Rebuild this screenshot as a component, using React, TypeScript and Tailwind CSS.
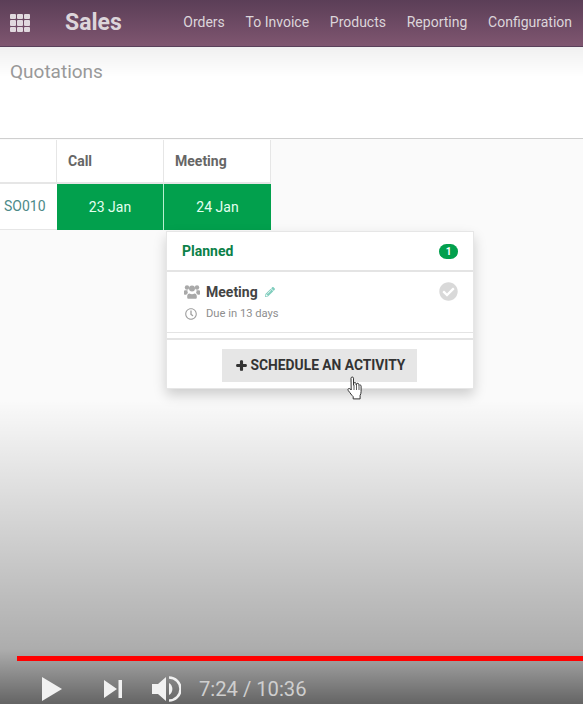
import React from "react";
import { FaCheckCircle, FaPencilAlt, FaPlus, FaRegClock } from "react-icons/fa";

const navItems = ["Orders", "To Invoice", "Products", "Reporting", "Configuration"];

function Cursor() {
  return (
    <svg width="18" height="24" viewBox="0 0 18 24" className="absolute left-[346px] top-[376px] z-30">
      <path
        d="M5 2.2c0-1.6 2.500-1.600 2.500 0v7l.2-1.700c.2-1.400 2.300-1.300 2.400.1l.1 1.400.3-.9c.4-1.300 2.300-1 2.300.3l.1 1.100c.4-1 2.200-.8 2.200.6v5.400c0 1.700-.4 2.800-1 3.900v3.500H7.200v-2.200c-1.500-1.400-3-3.700-4.900-6.100-1.100-1.500.6-2.900 2-1.600l.9 1z"
        fill="#fff"
        stroke="#333"
        strokeWidth="1"
        strokeLinejoin="round"
      />
      <path d="M8 9v5M10.500 9v5M13 10v4" stroke="#333" strokeWidth="0.8" />
    </svg>
  );
}

function UsersIcon() {
  return (
    <svg width="16" height="14" viewBox="0 0 16 14" className="text-[#a9a9a9]" fill="currentColor">
      <circle cx="3" cy="2.500" r="2.200" />
      <circle cx="13" cy="2.500" r="2.200" />
      <circle cx="8" cy="3.500" r="3" />
      <path d="M0 6.200C0 5.500.6 5.300 1.400 5.300h2.200c-.2 1-.1 2 .5 2.800-.9.3-1.500.9-1.800 1.600H1c-.6 0-1-.4-1-1zM16 6.200c0-.7-.6-.9-1.400-.9h-2.200c.2 1 .1 2-.5 2.800.9.3 1.500.9 1.800 1.600H15c.6 0 1-.4 1-1z" />
      <path d="M3.200 11.200c0-1.700 1-2.800 2.300-2.800.7.500 1.600.8 2.500.8s1.800-.3 2.500-.8c1.300 0 2.300 1.100 2.300 2.800v1.300c0 .8-.5 1.300-1.300 1.300h-7c-.8 0-1.300-.5-1.300-1.300z" />
    </svg>
  );
}

export default function App() {
  return (
    <div className="relative h-[704px] w-[583px] overflow-hidden bg-[#fafafa] font-['Roboto',sans-serif]">
      <header className="flex h-[47px] items-center border-b border-[#59405a] bg-gradient-to-b from-[#5b3e57] to-[#7f5670] text-[#dcd5da]">
        <div className="ml-[10px] grid w-[20px] grid-cols-3 gap-[1px]">
          {Array.from({ length: 9 }).map((_, i) => (
            <span key={i} className="h-[5.5px] w-[6px] rounded-[1px] bg-[#e0d9de]" />
          ))}
        </div>
        <div className="mb-[1px] ml-[35px] text-[23px] font-bold leading-none">Sales</div>
        <nav className="mb-[2px] ml-auto mr-[11px] flex gap-[20.750px] text-[14px]">
          {navItems.map((item) => (
            <span key={item}>{item}</span>
          ))}
        </nav>
      </header>

      <div className="h-[92px] border-b border-[#cfcfcf] bg-white px-[10px] pt-[12px] text-[19px] leading-[26px] text-[#9a9a9a]">
        Quotations
      </div>

      <div className="grid w-[271px] grid-cols-[57px_107px_107px] pt-[1px]">
        <div className="h-[44px] border-r border-b-[2px] border-[#e6e6e6] bg-white" />
        <div className="flex h-[44px] items-center border-r border-b-[2px] border-[#e6e6e6] bg-white pl-[11px] text-[14px] font-bold text-[#666]">
          Call
        </div>
        <div className="flex h-[44px] items-center border-r border-b-[2px] border-[#e6e6e6] bg-white pl-[11px] text-[14px] font-bold text-[#666]">
          Meeting
        </div>
        <div className="flex h-[46px] items-center border-b border-[#e6e6e6] bg-white pl-[4px] text-[14px] text-[#4d8a88]">
          SO010
        </div>
        <div className="flex h-[46px] items-center justify-center border-r border-[#b8f0d0] bg-[#02a04d] text-[14px] text-[#e4fff0]">
          23 Jan
        </div>
        <div className="flex h-[46px] items-center justify-center bg-[#02a04d] text-[14px] text-[#e4fff0]">
          24 Jan
        </div>
      </div>

      <div className="absolute left-[166px] top-[231px] z-10 w-[308px] border border-[#e6e6e6] bg-white shadow-[0_6px_12px_rgba(0,0,0,0.18)]">
        <div className="flex h-[40px] items-center justify-between border-b-[2px] border-[#e4e4e4] pl-[15px] pr-[15px]">
          <span className="text-[14px] font-bold text-[#0b8148]">Planned</span>
          <span className="flex h-[15px] w-[19px] items-center justify-center rounded-full bg-[#02a04d] text-[10px] font-bold text-white">
            1
          </span>
        </div>
        <div className="relative h-[61px] border-b border-[#e4e4e4] pl-[17px] pt-[10px]">
          <div className="flex items-center">
            <UsersIcon />
            <span className="ml-[6px] text-[14px] font-bold leading-[20px] text-[#444]">Meeting</span>
            <FaPencilAlt size={10} className="ml-[7px] text-[#7fcdbd]" />
          </div>
          <div className="mt-[4px] flex items-center text-[#8e8e8e]">
            <FaRegClock size={12} className="ml-[1px] text-[#a0a0a0]" />
            <span className="ml-[9px] text-[11.200px] leading-[16px]">Due in 13 days</span>
          </div>
          <FaCheckCircle size={19} className="absolute right-[15px] top-[10px] text-[#d9d9d9]" />
        </div>
        <div className="mt-[5px] flex h-[50px] justify-center border-t-[2px] border-[#e4e4e4] pt-[9px]">
          <button className="mr-[2px] flex h-[33px] w-[195px] items-center justify-center bg-[#e6e6e6] pl-[3px] text-[13.800px] font-bold text-[#333]">
            <FaPlus size={11} stroke="currentColor" strokeWidth={50} className="mr-[4px]" />
            SCHEDULE AN ACTIVITY
          </button>
        </div>
      </div>

      <Cursor />

      <div className="pointer-events-none absolute inset-x-0 top-[47px] z-20 h-[30px] bg-gradient-to-b from-[rgba(0,0,0,0.06)] to-transparent" />
      <div className="pointer-events-none absolute inset-x-0 bottom-0 z-20 h-[304px] bg-gradient-to-b from-transparent via-[rgba(0,0,0,0.31)] via-[82%] to-[rgba(0,0,0,0.6)]" />

      <div className="absolute left-[17px] right-0 top-[656px] z-30 h-[5px] bg-[#ff0000]" />
      <div className="absolute left-[41px] top-[674px] z-30 flex items-center text-[#f1f1f1]">
        <svg width="22" height="28" viewBox="0 0 22 28"><path d="M1 2l20 12L1 26z" fill="#f1f1f1" /></svg>
        <svg width="20" height="20" viewBox="0 0 20 20" className="ml-[40px]"><path d="M1 1l13 9-13 9zM15.500 1H19v18h-3.500z" fill="#f1f1f1" /></svg>
        <svg width="30" height="28" viewBox="0 0 30 28" className="ml-[28px]">
          <path d="M1 9h6l8-7v24l-8-7H1z" fill="#f1f1f1" />
          <path d="M18 8a7 7 0 0 1 0 12z" fill="#f1f1f1" />
          <path d="M18 2.500a11.500 11.500 0 0 1 0 23" fill="none" stroke="#f1f1f1" strokeWidth="2.500" />
        </svg>
        <span className="ml-[18px] text-[20.200px] text-[#cfcfcf]">7:24 / 10:36</span>
      </div>
    </div>
  );
}
